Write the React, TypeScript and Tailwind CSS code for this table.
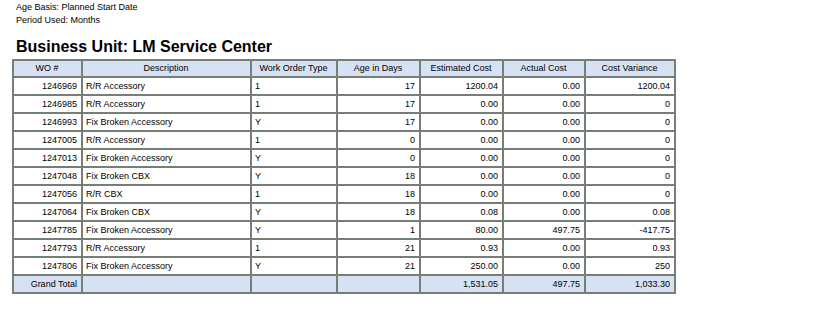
const rows = [
  ['1246969', 'R/R Accessory', '1', '17', '1200.04', '0.00', '1200.04'],
  ['1246985', 'R/R Accessory', '1', '17', '0.00', '0.00', '0'],
  ['1246993', 'Fix Broken Accessory', 'Y', '17', '0.00', '0.00', '0'],
  ['1247005', 'R/R Accessory', '1', '0', '0.00', '0.00', '0'],
  ['1247013', 'Fix Broken Accessory', 'Y', '0', '0.00', '0.00', '0'],
  ['1247048', 'Fix Broken CBX', 'Y', '18', '0.00', '0.00', '0'],
  ['1247056', 'R/R CBX', '1', '18', '0.00', '0.00', '0'],
  ['1247064', 'Fix Broken CBX', 'Y', '18', '0.08', '0.00', '0.08'],
  ['1247785', 'Fix Broken Accessory', 'Y', '1', '80.00', '497.75', '-417.75'],
  ['1247793', 'R/R Accessory', '1', '21', '0.93', '0.00', '0.93'],
  ['1247806', 'Fix Broken Accessory', 'Y', '21', '250.00', '0.00', '250'],
];

const columns = [
  { label: 'WO #', width: 'w-[69px]', align: 'text-right' },
  { label: 'Description', width: 'w-[169px]', align: 'text-left' },
  { label: 'Work Order Type', width: 'w-[86px]', align: 'text-left' },
  { label: 'Age in Days', width: 'w-[83px]', align: 'text-right' },
  { label: 'Estimated Cost', width: 'w-[83px]', align: 'text-right' },
  { label: 'Actual Cost', width: 'w-[82px]', align: 'text-right' },
  { label: 'Cost Variance', width: 'w-[90px]', align: 'text-right' },
];

const cell = 'border-r-2 border-b-2 border-[#777d77] pl-[3px] pr-[4px] p-0 whitespace-nowrap';

export default function App() {
  const totals = ['Grand Total', '', '', '', '1,531.05', '497.75', '1,033.30'];

  return (
    <div className="min-h-[310px] w-[821px] bg-white px-[12px] text-black [font-family:'Liberation_Sans',Arial,sans-serif]">
      {/* Report parameters */}
      <div className="pl-[4px] pt-[1px] text-[9px] leading-[13px]">
        <div>Age Basis: Planned Start Date</div>
        <div>Period Used: Months</div>
      </div>

      <h1 className="mt-[11px] pl-[4px] text-[16px] font-bold leading-[18px]">
        Business Unit: LM Service Center
      </h1>

      <table className="mt-[3px] w-[664px] table-fixed border-separate border-spacing-0 border-l-2 border-t-2 border-[#777d77] text-[9px]">
        <thead>
          <tr className="bg-[#d6e2f3] leading-[15px]">
            {columns.map((c) => (
              <th key={c.label} className={`${cell} ${c.width} text-center font-normal`}>
                {c.label}
              </th>
            ))}
          </tr>
        </thead>
        <tbody>
          {rows.map((r) => (
            <tr key={r[0]} className="leading-[16px]">
              {r.map((v, i) => (
                <td key={i} className={`${cell} ${columns[i].align}`}>
                  {v}
                </td>
              ))}
            </tr>
          ))}
          <tr className="bg-[#d6e2f3] leading-[16px]">
            {totals.map((v, i) => (
              <td key={i} className={`${cell} text-right`}>
                {v}
              </td>
            ))}
          </tr>
        </tbody>
      </table>
    </div>
  );
}
